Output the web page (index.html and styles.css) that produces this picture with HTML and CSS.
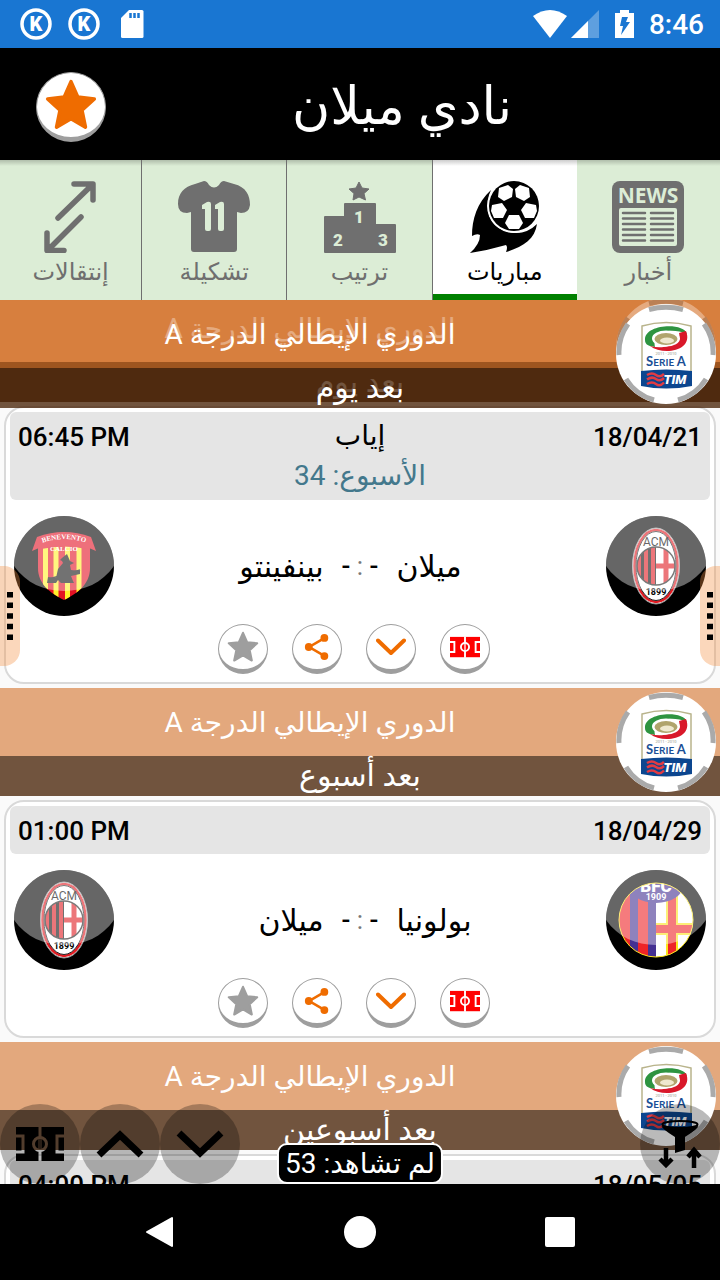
FILE: index.html
```html
<!DOCTYPE html>
<html lang="ar" dir="rtl">
<head>
<meta charset="utf-8">
<meta name="viewport" content="width=device-width, initial-scale=1">
<title>نادي ميلان</title>
<link rel="stylesheet" href="styles.css">
</head>
<body>
<svg class="defs" width="0" height="0" aria-hidden="true">
  <defs>
    <mask id="pitch-lines" maskUnits="userSpaceOnUse" x="0" y="0" width="48" height="34">
      <rect width="48" height="34" fill="#fff"/>
      <g fill="none" stroke="#000" stroke-width="3">
        <path d="M24 0V34M0 9H7V25H0M48 9H41V25H48"/>
        <circle cx="24" cy="17" r="6.500"/>
      </g>
    </mask>
    <clipPath id="milan-round"><circle cx="50" cy="50" r="19"/></clipPath>
    <clipPath id="bologna-round"><circle cx="50" cy="50" r="37"/></clipPath>
    <clipPath id="benevento-shield"><path d="M24 24H76V52C76 68 64 77 50 84C36 77 24 68 24 52Z"/></clipPath>
  </defs>
  <symbol id="k-badge" viewBox="0 0 32 32">
    <circle cx="16" cy="16" r="14" fill="none" stroke="#fff" stroke-width="3.5"/>
    <text x="16" y="23" text-anchor="middle" class="glyph-k">K</text>
  </symbol>
  <symbol id="star" viewBox="0 0 24 24">
    <path d="M12 2L14.9 8.6L22 9.4L16.7 14.2L18.2 21.5L12 17.9L5.8 21.5L7.3 14.2L2 9.4L9.1 8.6Z" fill="currentColor" stroke="currentColor" stroke-width="1.5" stroke-linejoin="round"/>
  </symbol>
  <symbol id="share" viewBox="0 0 30 30">
    <path d="M23 5L6 15L23 25" fill="none" stroke="currentColor" stroke-width="3"/>
    <g fill="currentColor"><circle cx="23.500" cy="4.500" r="4.500"/><circle cx="5.500" cy="15" r="4.500"/><circle cx="23.500" cy="25.500" r="4.500"/></g>
  </symbol>
  <symbol id="chevron" viewBox="0 0 30 18">
    <path d="M2 2.500L15 15L28 2.500" fill="none" stroke="currentColor" stroke-width="4" stroke-linecap="round" stroke-linejoin="round"/>
  </symbol>
  <symbol id="chevron-fab" viewBox="0 0 48 28">
    <path d="M3 3L24 23L45 3" fill="none" stroke="currentColor" stroke-width="7"/>
  </symbol>
  <symbol id="pitch" viewBox="0 0 48 34">
    <rect width="48" height="34" fill="currentColor" mask="url(#pitch-lines)"/>
    <path d="M24 12V22" stroke="currentColor" stroke-width="1"/>
  </symbol>
  <symbol id="serie-a" viewBox="0 0 100 100">
    <circle cx="50" cy="50" r="50" fill="#fff"/>
    <g fill="none" stroke="#aaa" stroke-width="5">
      <path d="M33 5.500Q50 1 67 5.500M12 20Q2 34 3 51M88 20Q98 34 97 51M10 75Q20 91 38 96M90 75Q80 91 62 96"/>
    </g>
    <path d="M26 22Q50 15 75 22V68H26Z" fill="#fff" stroke="#b9b48c" stroke-width="1.500"/>
    <path d="M29 36C28 20 68 18 71 30C55 23 36 27 39 43C33 42 29 41 29 36Z" fill="#2e9440"/>
    <path d="M70 27C78 47 47 52 34 42C49 46 66 40 63 29Z" fill="#d9182a"/>
    <ellipse cx="50" cy="34.500" rx="14" ry="8" fill="#fff"/>
    <ellipse cx="50" cy="35" rx="11.500" ry="6" fill="#b0a46c"/>
    <ellipse cx="51" cy="36.500" rx="7" ry="3" fill="#efe9cf"/>
    <text x="50" y="50.500" text-anchor="middle" class="serie-year">2010 - 2011</text>
    <text x="50" y="62" text-anchor="middle" class="serie-name">S<tspan class="serie-small">ERIE</tspan> A</text>
    <path d="M25 67Q50 64 76 67V82Q50 87 25 82Z" fill="#0c468f"/>
    <path d="M31 71Q36 68 40 71T48 70M31 75.500Q36 72 40 75T48 74M31 80Q36 77 40 80T48 78.500" fill="none" stroke="#e23b43" stroke-width="2.500"/>
    <text x="59" y="80" text-anchor="middle" class="serie-tim">TIM</text>
  </symbol>
  <symbol id="gloss" viewBox="0 0 100 100">
    <path d="M0 50A50 50 0 0 1 100 50C88 67 70 75 50 75S12 67 0 50Z" fill="#fff" fill-opacity=".4"/>
  </symbol>
  <symbol id="crest-milan" viewBox="0 0 100 100">
    <circle cx="50" cy="50" r="50"/>
    <ellipse cx="50" cy="50" rx="23.500" ry="38" fill="#fff" stroke="#999" stroke-width="1"/>
    <ellipse cx="50" cy="50" rx="21.500" ry="36" fill="#fff" stroke="#e01b22" stroke-width="2.500"/>
    <ellipse cx="50" cy="50" rx="20" ry="34.500" fill="none" stroke="#222" stroke-width="1"/>
    <g clip-path="url(#milan-round)">
      <rect x="30" y="30" width="20" height="40" fill="#111"/>
      <path d="M33 30V70M40 30V70M47 30V70" stroke="#e01b22" stroke-width="4"/>
      <rect x="50" y="30" width="20" height="40" fill="#fff"/>
      <path d="M60 30V70M50 50H70" stroke="#e01b22" stroke-width="5"/>
    </g>
    <circle cx="50" cy="50" r="19" fill="none" stroke="#222" stroke-width="1.500"/>
    <text x="50" y="30" text-anchor="middle" class="crest-acm">ACM</text>
    <text x="50" y="79" text-anchor="middle" class="crest-1899">1899</text>
    <use href="#gloss"/>
  </symbol>
  <symbol id="crest-benevento" viewBox="0 0 100 100">
    <circle cx="50" cy="50" r="50"/>
    <g clip-path="url(#benevento-shield)">
      <rect x="24" y="24" width="52" height="60" fill="#e31123"/>
      <path d="M31.500 24V84M42 24V84M53.500 24V84M65 24V84" stroke="#fff02a" stroke-width="5"/>
    </g>
    <path d="M18 35L23 21Q50 11 77 21L82 35L75 32V27Q50 19 25 27V32Z" fill="#e31123"/>
    <path d="M27 25Q50 17 73 25V33Q50 28 27 33Z" fill="#e31123"/>
    <path id="ribbon-curve" d="M25 28Q50 18 75 28" fill="none"/>
    <text class="crest-ribbon" text-anchor="middle"><textPath href="#ribbon-curve" startOffset="50%">BENEVENTO</textPath></text>
    <text x="50" y="35" text-anchor="middle" class="crest-ribbon">CALCIO</text>
    <path d="M48 42L53 38L56 45L60 47L56 49L57 54L66 55V58L57 60L59 65L60 67H47L44 64L42 67H33L34 61L42 62L44 53L49 47L48 45L46 44Z" fill="#151515"/>
    <path d="M35 63L66 54" stroke="#151515" stroke-width="1.500"/>
    <use href="#gloss"/>
  </symbol>
  <symbol id="crest-bologna" viewBox="0 0 100 100">
    <circle cx="50" cy="50" r="50"/>
    <g clip-path="url(#bologna-round)">
      <rect x="12" y="12" width="38" height="76" fill="#ee2427"/>
      <path d="M28 12V88M46 12V88" stroke="#443092" stroke-width="8"/>
      <rect x="50" y="12" width="38" height="76" fill="#fff"/>
      <path d="M66 12V88M50 59H88" stroke="#fbe51c" stroke-width="12"/>
      <path d="M66 12V88M50 59H88" stroke="#ee2427" stroke-width="8"/>
      <ellipse cx="50" cy="14" rx="28" ry="19" fill="#443092"/>
      <text x="50" y="22" text-anchor="middle" class="crest-bfc">BFC</text>
      <text x="50" y="30" text-anchor="middle" class="crest-1909">1909</text>
    </g>
    <circle cx="50" cy="50" r="37" fill="none" stroke="#fbe51c" stroke-width="1"/>
    <use href="#gloss"/>
  </symbol>
</svg>

<div class="status" dir="ltr">
  <div class="status-group status-notes">
    <svg class="ic-32" aria-hidden="true"><use href="#k-badge"/></svg>
    <svg class="ic-32" aria-hidden="true"><use href="#k-badge"/></svg>
    <svg class="ic-32" viewBox="0 0 32 32" aria-hidden="true"><path d="M13 2H26Q27.500 2 27.500 3.500V28.500Q27.500 30 26 30H6.500Q5 30 5 28.500V10Z" fill="#fff"/><path d="M14.500 5V10M18.500 5V10M22.500 5V10" stroke="#1976d2" stroke-width="2.500"/></svg>
  </div>
  <div class="status-group">
    <svg class="ic-wifi" viewBox="0 0 34 28" aria-hidden="true"><path d="M0 6Q17 -6 34 6L17 28Z" fill="#fff"/></svg>
    <svg class="ic-signal" viewBox="0 0 28 28" aria-hidden="true"><path d="M28 0V28H0Z" fill="#fff" fill-opacity=".3"/><path d="M17 11V28H0Z" fill="#fff"/></svg>
    <svg class="ic-battery" viewBox="0 0 20 30" aria-hidden="true"><path d="M5 1H14V4H19V29H0V4H5Z" fill="#fff"/><path d="M7 8H13L11 13H15L6 26L8 17H5Z" fill="#1976d2"/></svg>
    <span class="clock">8:46</span>
  </div>
</div>

<div class="app">
  <header class="topbar">
    <h1 class="topbar-title">نادي ميلان</h1>
    <button class="round round-lg" type="button" aria-label="المفضلة"><svg class="ic-56"><use href="#star"/></svg></button>
  </header>

  <nav class="tabs">
    <a class="tab" href="#news">
      <svg class="tab-icon" viewBox="0 0 72 72"><rect width="72" height="72" rx="8" fill="currentColor"/><text x="36" y="22" text-anchor="middle" class="glyph-news">NEWS</text><rect x="7" y="27" width="58" height="38" rx="2" class="tab-cut"/><path d="M11 32H33M11 37.500H33M11 43H33M11 48.500H33M11 54H33M11 59.500H33M39 32H61M39 37.500H61M39 43H61M39 48.500H61M39 54H61M39 59.500H61" stroke="currentColor" stroke-width="2.500" stroke-linecap="round"/></svg>
      <span>أخبار</span>
    </a>
    <a class="tab tab-active" href="#matches" aria-current="page">
      <svg class="tab-icon" viewBox="0 0 72 72"><path d="M22 9C8 22 3 38 3 55Q8 52 11 54Q11 63 1 72Q20 69 37 64Q39 66 37 71C54 66 66 58 68 43Q56 55 39 51Q14 44 20 14Z" fill="currentColor"/><circle cx="45" cy="25" r="27" fill="#fff"/><circle cx="45" cy="25" r="25" fill="currentColor"/><path d="M30 7L39 4L44 8L43 16L35 20L29 16ZM60 7L51 4L46 8L47 16L55 20L61 16ZM23 24L33 22L38 29L34 37L25 37L22 30ZM67 24L57 22L52 29L56 37L65 37L68 30ZM40 34H50L54 42L50 48H40L36 42Z" fill="#fff"/></svg>
      <span>مباريات</span>
    </a>
    <a class="tab" href="#ranking">
      <svg class="tab-icon" viewBox="0 0 72 72"><path d="M35 1L38 7L45 8L40 12.500L41.500 19L35 16L29 19L30 12.500L25 8L32 7Z" fill="currentColor" stroke="currentColor" stroke-linejoin="round"/><path d="M20 23Q20 22 21 22H51Q52 22 52 23V43H71Q72 43 72 44V71Q72 72 71 72H1Q0 72 0 71V36Q0 35 1 35H20Z" fill="currentColor"/><g class="glyph-podium" text-anchor="middle"><text x="35" y="42">1</text><text x="14" y="65">2</text><text x="59" y="65">3</text></g></svg>
      <span>ترتيب</span>
    </a>
    <a class="tab" href="#squad">
      <svg class="tab-icon" viewBox="0 0 72 72"><path d="M17 3L26 0Q29 0 31 4Q36 9 41 4Q43 0 46 0L56 3C68 6 72 14 72 24Q71 32 63 32L59 31V68Q59 71 56 71H16Q13 71 13 68V31L9 32Q0 32 0 23C0 12 6 6 17 3Z" fill="currentColor"/><g class="tab-cut"><path d="M24 24L29 21Q33 20 33 23V48Q33 50 31 50H29Q27 50 27 48V28L24 28ZM37 24L42 21Q46 20 46 23V48Q46 50 44 50H42Q40 50 40 48V28L37 28Z"/></g></svg>
      <span>تشكيلة</span>
    </a>
    <a class="tab" href="#transfers">
      <svg class="tab-icon" viewBox="0 0 72 72"><path d="M23 37L57 4M39 3H58V19M46 36L13 69M12 52V69.500H29" fill="none" stroke="currentColor" stroke-width="5.500" stroke-linecap="round" stroke-linejoin="round"/></svg>
      <span>إنتقالات</span>
    </a>
  </nav>

  <main class="list">
    <div class="league league-pinned">
      <h2 class="league-name">الدوري الإيطالي الدرجة A</h2>
      <p class="league-when">بعد يوم</p>
      <svg class="league-logo"><use href="#serie-a"/></svg>
    </div>

    <div class="feed">
      <section>
        <div class="league">
          <h2 class="league-name">الدوري الإيطالي الدرجة A</h2>
          <p class="league-when">بعد يوم</p>
          <svg class="league-logo"><use href="#serie-a"/></svg>
        </div>
        <article class="card">
          <div class="card-head">
            <time>18/04/21</time><span class="leg">إياب</span><time dir="ltr">06:45 PM</time>
            <p class="week">الأسبوع: 34</p>
          </div>
          <div class="teams">
            <svg class="crest"><use href="#crest-milan"/></svg>
            <span class="team team-home">ميلان</span>
            <span class="score">- <i>:</i> -</span>
            <span class="team">بينفينتو</span>
            <svg class="crest"><use href="#crest-benevento"/></svg>
          </div>
          <div class="actions">
            <button class="round red" type="button" aria-label="الملعب"><svg class="ic-pitch"><use href="#pitch"/></svg></button>
            <button class="round orange" type="button" aria-label="المزيد"><svg class="ic-chevron"><use href="#chevron"/></svg></button>
            <button class="round orange" type="button" aria-label="مشاركة"><svg class="ic-share"><use href="#share"/></svg></button>
            <button class="round grey" type="button" aria-label="المفضلة"><svg class="ic-star"><use href="#star"/></svg></button>
          </div>
        </article>
      </section>

      <section>
        <div class="league">
          <h2 class="league-name">الدوري الإيطالي الدرجة A</h2>
          <p class="league-when">بعد أسبوع</p>
          <svg class="league-logo"><use href="#serie-a"/></svg>
        </div>
        <article class="card">
          <div class="card-head">
            <time>18/04/29</time><span class="leg"></span><time dir="ltr">01:00 PM</time>
          </div>
          <div class="teams">
            <svg class="crest"><use href="#crest-bologna"/></svg>
            <span class="team team-home">بولونيا</span>
            <span class="score">- <i>:</i> -</span>
            <span class="team">ميلان</span>
            <svg class="crest"><use href="#crest-milan"/></svg>
          </div>
          <div class="actions">
            <button class="round red" type="button" aria-label="الملعب"><svg class="ic-pitch"><use href="#pitch"/></svg></button>
            <button class="round orange" type="button" aria-label="المزيد"><svg class="ic-chevron"><use href="#chevron"/></svg></button>
            <button class="round orange" type="button" aria-label="مشاركة"><svg class="ic-share"><use href="#share"/></svg></button>
            <button class="round grey" type="button" aria-label="المفضلة"><svg class="ic-star"><use href="#star"/></svg></button>
          </div>
        </article>
      </section>

      <section>
        <div class="league">
          <h2 class="league-name">الدوري الإيطالي الدرجة A</h2>
          <p class="league-when">بعد أسبوعين</p>
          <svg class="league-logo"><use href="#serie-a"/></svg>
        </div>
        <article class="card">
          <div class="card-head">
            <time>18/05/05</time><span class="leg"></span><time dir="ltr">04:00 PM</time>
          </div>
        </article>
      </section>
    </div>

    <div class="fabs" dir="ltr">
      <button class="fab" type="button" aria-label="الملعب"><svg class="fab-pitch"><use href="#pitch"/></svg></button>
      <button class="fab" type="button" aria-label="أعلى"><svg class="fab-chevron flip"><use href="#chevron-fab"/></svg></button>
      <button class="fab" type="button" aria-label="أسفل"><svg class="fab-chevron"><use href="#chevron-fab"/></svg></button>
      <button class="fab fab-filter" type="button" aria-label="تصفية"><svg class="ic-filter" viewBox="0 0 44 48"><ellipse cx="22" cy="4.500" rx="17.500" ry="3.500" fill="none" stroke="currentColor" stroke-width="2"/><path d="M3.500 6Q22 11 40.500 6Q40 9 27 17V30L17 33V17Q4 9 3.500 6Z" fill="currentColor"/><path d="M8 28V44M2 39L8 45L14 39M36 48V30M30 37L36 30L42 37" fill="none" stroke="currentColor" stroke-width="4.500"/></svg></button>
    </div>
    <button class="unseen" type="button">لم تشاهد: 53</button>
  </main>

  <button class="handle handle-start" type="button" aria-label="القائمة"><svg class="dots" viewBox="0 0 6 48"><path d="M3 0V48" stroke="#000" stroke-width="6" stroke-dasharray="5.500 5.100"/></svg></button>
  <button class="handle handle-end" type="button" aria-label="الخيارات"><svg class="dots" viewBox="0 0 6 48"><path d="M3 0V48" stroke="#000" stroke-width="6" stroke-dasharray="5.500 5.100"/></svg></button>
</div>

<nav class="sysnav" dir="ltr">
  <button type="button" aria-label="رجوع"><svg viewBox="0 0 32 32"><path d="M3 16L28 2V30Z" fill="#fff" stroke="#fff" stroke-width="2" stroke-linejoin="round"/></svg></button>
  <button type="button" aria-label="الرئيسية"><svg viewBox="0 0 32 32"><circle cx="16" cy="16" r="16" fill="#fff"/></svg></button>
  <button type="button" aria-label="التطبيقات"><svg viewBox="0 0 32 32"><rect x="1" y="1" width="30" height="30" rx="2" fill="#fff"/></svg></button>
</nav>
</body>
</html>
```

FILE: styles.css
```css
* { box-sizing: border-box; }

body {
  margin: 0;
  height: 100vh;
  display: flex;
  flex-direction: column;
  overflow: hidden;
  background: #fafafa;
  color: #000;
  font-family: Roboto, "DejaVu Sans", sans-serif;
  font-size: 28px;
}

h1, h2, p { margin: 0; font-weight: 400; }
button { padding: 0; border: 0; background: none; color: inherit; font: inherit; cursor: pointer; }
svg { display: block; flex: none; }
.defs { position: absolute; }

/* Lettering inside icons and crests */
.glyph-k { font: 900 20px Roboto, sans-serif; fill: #fff; }
.glyph-news { font: 700 21px "Open Sans", sans-serif; fill: #dcedd6; }
.glyph-podium { font: 900 17px Roboto, sans-serif; fill: #dcedd6; }
.serie-year { font: 4px Roboto, sans-serif; fill: #998; }
.serie-name { font: 700 13px Lato, sans-serif; fill: #1b4f96; }
.serie-small { font-size: 10px; }
.serie-tim { font: italic 900 13px Roboto, sans-serif; fill: #fff; }
.crest-acm { font: 12px Roboto, sans-serif; }
.crest-1899 { font: 700 9px Roboto, sans-serif; }
.crest-ribbon { font: 700 7px "Liberation Serif", serif; fill: #fff; }
.crest-bfc { font: 900 17px Roboto, sans-serif; fill: #fff; }
.crest-1909 { font: 700 9px Roboto, sans-serif; fill: #fff; }

/* System status bar */
.status {
  height: 48px;
  flex: none;
  display: flex;
  justify-content: space-between;
  align-items: center;
  padding: 0 16px 0 20px;
  background: #1976d2;
  color: #fff;
}
.status-group { display: flex; align-items: center; }
.status-notes { gap: 16px; }
.ic-32 { width: 32px; height: 32px; }
.ic-wifi { width: 34px; height: 28px; margin-right: 4px; }
.ic-signal { width: 28px; height: 28px; margin-right: 16px; }
.ic-battery { width: 20px; height: 30px; margin-right: 14px; }
.clock { font-size: 28px; font-weight: 500; }

/* App frame */
.app { position: relative; flex: 1; min-height: 0; display: flex; flex-direction: column; }
.topbar {
  flex: none;
  min-height: 112px;
  display: flex;
  align-items: center;
  padding: 6px 22px 0 36px;
  background: #000;
  color: #fff;
}
.topbar-title { flex: 1; text-align: center; font-size: 52px; line-height: 72px; }

.round {
  width: 50px;
  height: 50px;
  display: flex;
  align-items: center;
  justify-content: center;
  border: 1px solid #9e9e9e;
  border-bottom-width: 5px;
  border-radius: 50%;
  background: #fff;
}
.round-lg { width: 70px; height: 70px; color: #ef6c00; }
.ic-56 { width: 56px; height: 56px; }
.orange { color: #ef6c00; }
.red { color: #f00; }
.grey { color: #9e9e9e; }
.ic-pitch { width: 30px; height: 22px; }
.ic-chevron { width: 30px; height: 18px; }
.ic-share { width: 26px; height: 30px; }
.ic-star { width: 34px; height: 34px; }

.tabs {
  flex: none;
  display: flex;
  background: linear-gradient(#0003, #0000 6px) #dcedd6;
}
.tab {
  flex: 145 1 0;
  display: flex;
  flex-direction: column;
  align-items: center;
  padding-top: 21px;
  height: 140px;
  border-left: 1px solid #6f6f6f;
  color: #6f6f6f;
  font-size: 24px;
  line-height: 38px;
  text-decoration: none;
}
.tab:first-child { flex-grow: 144; border-left: 0; }
.tab:last-child { flex-grow: 142; border-left: 0; }
.tab-active {
  background: linear-gradient(#0003, #0000 6px) #fff;
  color: #000;
  box-shadow: inset 0 -6px #008000;
}
.tab-icon { width: 72px; height: 72px; }
.tab-cut { fill: #dcedd6; }

/* Match list */
.list { position: relative; flex: 1; min-height: 0; overflow: hidden; }
.feed { margin-top: -6px; }
.league { position: relative; background: rgba(204, 85, 0, .5); color: #fff; text-align: center; }
.league-pinned { position: absolute; top: 0; right: 0; left: 0; z-index: 1; }
.league-name { height: 68px; padding-right: 100px; font-size: 28px; line-height: 70px; }
.league-when { height: 40px; background: rgba(0, 0, 0, .5); font-size: 30px; line-height: 40px; }
.league-logo { position: absolute; top: 4px; right: 4px; width: 100px; height: 100px; }

.card { margin: 4px; padding: 4px 4px 8px; border: 2px solid #d9d9d9; border-radius: 20px; background: #fff; }
.card-head {
  display: grid;
  grid-template-columns: 1fr auto 1fr;
  padding: 4px 8px;
  border-radius: 6px;
  background: #e5e5e5;
  line-height: 40px;
}
.card-head time { height: 40px; font-size: 26px; font-weight: 500; line-height: 42px; }
.card-head time:last-of-type { text-align: left; }
.leg { height: 40px; }
.week { grid-column: 1 / -1; height: 40px; text-align: center; color: #43788c; }
.teams {
  display: grid;
  grid-template-columns: 100px 1fr auto 1fr 100px;
  align-items: center;
  column-gap: 18px;
  padding: 16px 4px 8px;
}
.team { font-size: 30px; }
.team-home { text-align: left; }
.score { white-space: pre; font-size: 26px; font-weight: 500; }
.score i { color: #777; font-style: normal; font-weight: 400; }
.crest { width: 100px; height: 100px; }
.actions { display: flex; justify-content: center; gap: 24px; padding-right: 12px; }

/* Floating controls */
.fabs { position: absolute; right: 0; bottom: 0; left: 0; display: flex; }
.fab {
  width: 80px;
  height: 80px;
  display: flex;
  align-items: center;
  justify-content: center;
  border-radius: 50%;
  background: rgba(0, 0, 0, .27);
}
.fab-filter { margin-left: auto; }
.fab-pitch { width: 48px; height: 34px; }
.fab-chevron { width: 48px; height: 28px; }
.flip { transform: rotate(180deg); }
.ic-filter { width: 44px; height: 48px; }
.unseen {
  position: absolute;
  bottom: 0;
  left: 50%;
  transform: translateX(-50%);
  height: 41px;
  padding: 0 6px;
  border: 2px solid #fff;
  border-radius: 10px;
  background: #000;
  color: #fff;
  line-height: 36px;
  white-space: nowrap;
}
.handle {
  position: absolute;
  top: 50%;
  transform: translateY(-50%);
  width: 20px;
  height: 100px;
  display: flex;
  align-items: center;
  justify-content: center;
  background: rgba(244, 143, 67, .36);
}
.handle-start { left: 0; border-radius: 0 16px 16px 0; }
.handle-end { right: 0; border-radius: 16px 0 0 16px; }
.dots { width: 6px; height: 48px; }

/* System navigation bar */
.sysnav {
  flex: none;
  height: 96px;
  display: flex;
  justify-content: center;
  align-items: center;
  gap: 168px;
  background: #000;
}
.sysnav svg { width: 32px; height: 32px; }
```
